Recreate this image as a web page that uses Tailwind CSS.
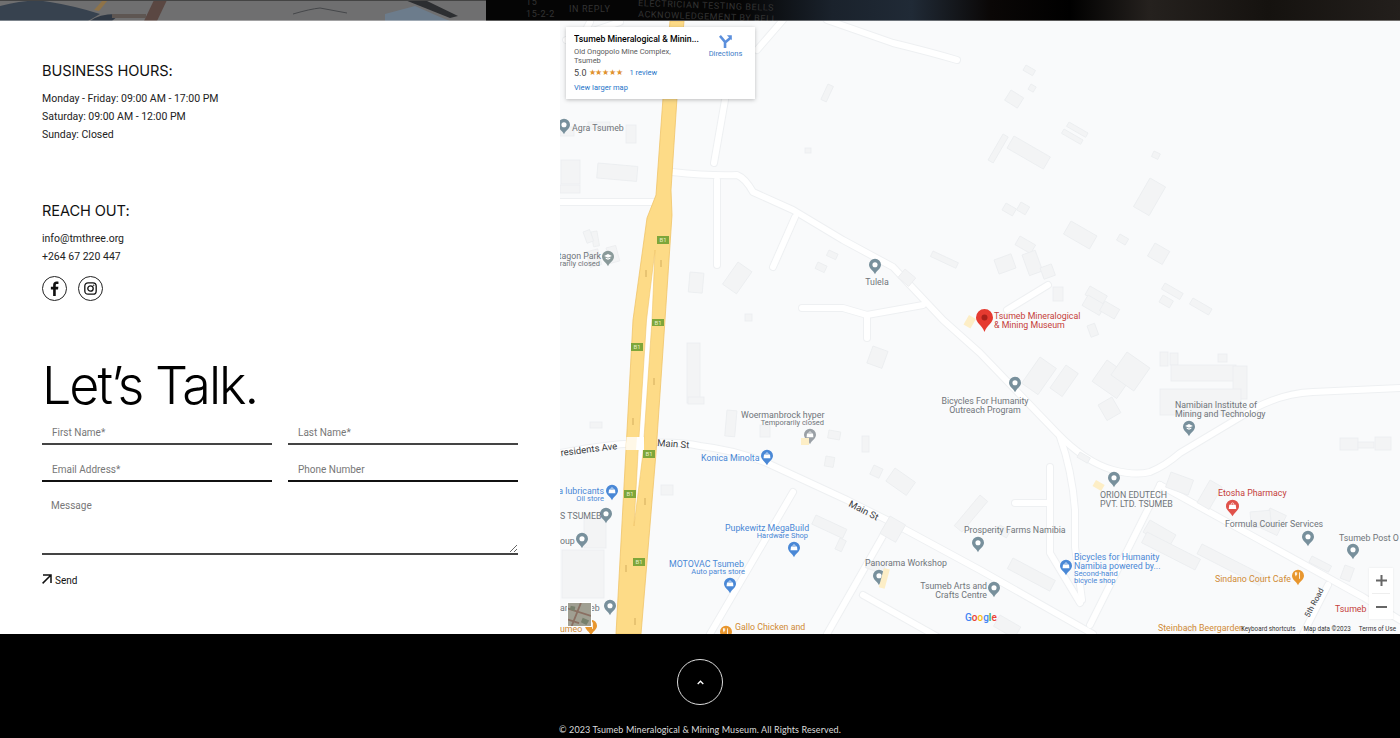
<!DOCTYPE html>
<html lang="en">
<head>
  <meta charset="UTF-8">
  <title>Tsumeb Mineralogical & Mining Museum - Contact</title>
  <script src="https://cdn.jsdelivr.net/npm/@tailwindcss/browser@4"></script>
</head>
<body class="bg-white overflow-hidden font-['Roboto',sans-serif] text-[#222]">

  <!-- bottom edge of the hero photo -->
  <svg class="block w-[1400px] h-[21px]" viewBox="0 0 1400 21">
    <defs>
      <linearGradient id="heroRight" x1="0" x2="1" y1="0" y2="0">
        <stop offset="0" stop-color="#050505"/><stop offset="0.14" stop-color="#1a222c"/><stop offset="0.26" stop-color="#202a36"/><stop offset="0.38" stop-color="#0a0706"/><stop offset="0.5" stop-color="#000"/><stop offset="0.62" stop-color="#25211e"/><stop offset="0.8" stop-color="#15120f"/><stop offset="1" stop-color="#231f1c"/>
      </linearGradient>
    </defs>
    <rect width="486" height="21" fill="#6f6f70"/>
    <path d="M0 6Q30-2 50 2 75 6 100 14L88 21H0z" fill="#37424f"/>
    <path d="M90 21Q100 13 120 14L112 21z" fill="#2f3844"/>
    <path d="M94 10L103 0H108L99 11z" fill="#8f7348"/>
    <path d="M144 21L154 0H167L157 21z" fill="#5a4742"/>
    <path d="M112 14H146V18H112z" fill="#5e5652"/>
    <path d="M293 14Q310 9 320 8L347 13" stroke="#45474a" fill="none"/>
    <path d="M385 14L415 6 440 17 450 21H385z" fill="#6b8093" opacity=".8"/>
    <path d="M405 0H425L458 16 450 18z" fill="#2c2e31"/>
    <rect y="0" width="486" height="1" fill="#444"/>
    <rect x="486" width="914" height="21" fill="#050505"/>
    <rect x="740" width="660" height="21" fill="url(#heroRight)"/>
    <g fill="#333" font-family="Roboto, sans-serif" font-size="9" letter-spacing=".6">
      <text x="526" y="5">15</text>
      <text x="526" y="17">15-2-2</text>
      <text x="569" y="12">IN REPLY</text>
      <text x="638" y="6" transform="rotate(2 638 6)">ELECTRICIAN TESTING BELLS</text>
      <text x="638" y="17" transform="rotate(2 638 17)">ACKNOWLEDGEMENT BY BELL</text>
    </g>
    <rect y="20" width="1400" height="1" fill="#fff" opacity=".35"/>
  </svg>

  <main class="flex h-[613px]">
    <section class="w-[560px] shrink-0 px-[42px] pt-[40px]">
      <h3 class="font-['Inter',sans-serif] text-[14.6px] leading-5 tracking-[-0.1px] text-[#111]">BUSINESS HOURS:</h3>
      <div class="mt-[9px] text-[10.5px] leading-[18px]">
        <p>Monday - Friday: 09:00 AM - 17:00 PM</p>
        <p>Saturday: 09:00 AM - 12:00 PM</p>
        <p>Sunday: Closed</p>
      </div>

      <h3 class="mt-[57px] font-['Inter',sans-serif] text-[14.6px] leading-5 tracking-[-0.1px] text-[#111]">REACH OUT:</h3>
      <div class="mt-[9px] text-[10.5px] leading-[18px]">
        <p>info@tmthree.org</p>
        <p>+264 67 220 447</p>
      </div>
      <div class="mt-[10px] flex gap-[11px]">
        <a href="#" class="w-[25px] h-[25px] rounded-full border border-[#222] flex items-center justify-center">
          <svg class="w-[15px] h-[15px]" viewBox="0 0 24 24" fill="#111"><path d="M14 24V13.500h3.600l.6-4.200H14V6.700c0-1.200.4-2 2.100-2h2.200V1c-.4 0-1.700-.2-3.200-.2-3.200 0-5.300 1.900-5.300 5.500v3H6.200v4.200h3.600V24z"/></svg>
        </a>
        <a href="#" class="w-[25px] h-[25px] rounded-full border border-[#222] flex items-center justify-center">
          <svg class="w-[13px] h-[13px]" viewBox="0 0 24 24" fill="none" stroke="#111" stroke-width="2.400"><rect x="1.500" y="1.500" width="21" height="21" rx="6"/><circle cx="12" cy="12" r="5"/><circle cx="18" cy="6" r=".8" fill="#111" stroke-width="1"/></svg>
        </a>
      </div>

      <h1 class="mt-[55px] font-['Inter',sans-serif] text-[52px] leading-[60px] font-light text-black tracking-[-2px]">Let’s Talk.</h1>

      <form class="mt-[5px]">
        <div class="grid grid-cols-2 gap-x-4 gap-y-[13px]">
          <input class="w-full h-[24px] pl-[10px] text-[10px] border-b-2 border-[#444] outline-none placeholder:text-[#777]" placeholder="First Name*">
          <input class="w-full h-[24px] pl-[10px] text-[10px] border-b-2 border-[#444] outline-none placeholder:text-[#777]" placeholder="Last Name*">
          <input class="w-full h-[24px] pl-[10px] text-[10px] border-b-2 border-[#111] outline-none placeholder:text-[#777]" placeholder="Email Address*">
          <input class="w-full h-[24px] pl-[10px] text-[10px] border-b-2 border-[#111] outline-none placeholder:text-[#777]" placeholder="Phone Number">
        </div>
        <textarea class="block w-full h-[73px] pl-[9px] pt-[16px] text-[10px] border-b-2 border-[#444] outline-none placeholder:text-[#777]" placeholder="Message"></textarea>
        <button type="button" class="mt-[20px] flex items-center gap-[3px] text-[10px] leading-3 text-[#111]">
          <svg class="w-[10px] h-[10px] -translate-y-[2px]" viewBox="0 0 10 10" fill="none" stroke="#111" stroke-width="1.500"><path d="M1 1h8v8M9 1L.6 9.400"/></svg>
          Send
        </button>
      </form>
    </section>

    <section class="relative flex-1 overflow-hidden bg-[#f9fafb]">
      <svg class="block w-[840px] h-[613px]" viewBox="560 21 840 613" font-family="Roboto, sans-serif" font-size="8.800">
        <defs>
          <symbol id="pin" viewBox="0 0 14 18"><path d="M7 0a7 7 0 0 1 7 7c0 4.500-4.800 6.500-7 11C4.800 13.500 0 11.500 0 7a7 7 0 0 1 7-7z"/><circle cx="7" cy="7" r="3" fill="#fff"/></symbol>
          <symbol id="bag" viewBox="0 0 14 18"><path d="M7 0a7 7 0 0 1 7 7c0 4.500-4.800 6.500-7 11C4.800 13.500 0 11.500 0 7a7 7 0 0 1 7-7z"/><path d="M3.500 5.500h7l.5 4.500H3z" fill="#fff"/><path d="M5.500 5.500a1.500 2 0 0 1 3 0" fill="none" stroke="#fff" stroke-width=".8"/></symbol>
          <symbol id="cap" viewBox="0 0 14 18"><path d="M7 0a7 7 0 0 1 7 7c0 4.500-4.800 6.500-7 11C4.800 13.500 0 11.500 0 7a7 7 0 0 1 7-7z"/><path d="M2.500 6L7 3.800 11.500 6 7 8.200z" fill="#fff"/><path d="M4.300 7.700v1.500L7 10.500l2.700-1.300V7.700L7 9z" fill="#fff"/></symbol>
          <symbol id="food" viewBox="0 0 14 18"><path d="M7 0a7 7 0 0 1 7 7c0 4.500-4.800 6.500-7 11C4.800 13.500 0 11.500 0 7a7 7 0 0 1 7-7z"/><path d="M4.500 3v4.500M8.800 3v7.500M4 3v2.500h1.500V3" stroke="#fff" fill="none"/></symbol>
        </defs>

        <!-- roads, casing first -->
        <g fill="none" stroke="#eef0f2" stroke-width="8" stroke-linecap="round" stroke-linejoin="round">
          <path d="M560 453Q600 445 640 443T700 446Q735 450 767 463L847 500 893 523 980 570 1093 634"/>
          <path d="M672 172Q710 176 737 175 745 178 753 192L793 210 843 240 893 267 943 320 980 353 1057 433Q1085 462 1113 470 1135 476 1150 472 1165 466 1180 453L1257 407Q1285 393 1313 392L1400 388"/>
          <path d="M725 100L714 163"/><path d="M717 180V265"/><path d="M795 217L773 267"/>
          <path d="M560 202H653"/>
          <path d="M827 20L893 43Q930 52 957 60"/><path d="M783 20L757 50"/>
          <path d="M802 308H843L867 315 923 305"/><path d="M867 315V338"/>
          <path d="M1060 437Q1072 470 1075 510V547L1082 600"/><path d="M1050 467V553L1080 603"/><path d="M1015 503H1050"/>
          <path d="M1160 485L1363 597 1400 620"/><path d="M1160 485L1090 625"/>
          <path d="M793 492L710 634"/><path d="M888 527L827 634"/><path d="M863 595L943 640"/><path d="M1328 585L1303 634"/>
          <path d="M1007 310L1048 285"/>
          <path d="M570 60L590 22"/><path d="M566 40L620 22"/>
        </g>
        <g fill="none" stroke="#fff" stroke-width="6" stroke-linecap="round" stroke-linejoin="round">
          <path d="M560 453Q600 445 640 443T700 446Q735 450 767 463L847 500 893 523 980 570 1093 634"/>
          <path d="M672 172Q710 176 737 175 745 178 753 192L793 210 843 240 893 267 943 320 980 353 1057 433Q1085 462 1113 470 1135 476 1150 472 1165 466 1180 453L1257 407Q1285 393 1313 392L1400 388"/>
          <path d="M725 100L714 163"/><path d="M717 180V265"/><path d="M795 217L773 267"/>
          <path d="M560 202H653"/>
          <path d="M827 20L893 43Q930 52 957 60"/><path d="M783 20L757 50"/>
          <path d="M802 308H843L867 315 923 305"/><path d="M867 315V338"/>
          <path d="M1060 437Q1072 470 1075 510V547L1082 600"/><path d="M1050 467V553L1080 603"/><path d="M1015 503H1050"/>
          <path d="M1160 485L1363 597 1400 620"/><path d="M1160 485L1090 625"/>
          <path d="M793 492L710 634"/><path d="M888 527L827 634"/><path d="M863 595L943 640"/><path d="M1328 585L1303 634"/>
          <path d="M1007 310L1048 285"/>
          <path d="M570 60L590 22"/><path d="M566 40L620 22"/>
        </g>

        <!-- buildings -->
        <g fill="#f3f4f5" stroke="#ebedef" stroke-width=".8">
          <rect x="828" y="84" width="6" height="17" transform="rotate(25 828 84)"/><rect x="805" y="148" width="6" height="5"/>
          <rect x="1026" y="65" width="11" height="6" transform="rotate(30 1026 65)"/><rect x="1031" y="84" width="6" height="6" transform="rotate(30 1031 84)"/>
          <rect x="1011" y="90" width="15" height="12" transform="rotate(32 1011 90)"/><rect x="1069" y="122" width="22" height="5" transform="rotate(30 1069 122)"/>
          <rect x="1064" y="129" width="22" height="5" transform="rotate(30 1064 129)"/><rect x="1014" y="136" width="42" height="14" transform="rotate(30 1014 136)"/>
          <rect x="1003" y="134" width="6" height="30" transform="rotate(30 1003 134)"/><rect x="1154" y="151" width="7" height="6" transform="rotate(25 1154 151)"/>
          <rect x="1150" y="178" width="18" height="33" transform="rotate(30 1150 178)"/><rect x="1071" y="221" width="30" height="15" transform="rotate(30 1071 221)"/>
          <rect x="1120" y="234" width="10" height="7" transform="rotate(30 1120 234)"/><rect x="1155" y="243" width="17" height="15" transform="rotate(30 1155 243)"/>
          <rect x="1006" y="203" width="12" height="8" transform="rotate(30 1006 203)"/><rect x="1020" y="236" width="18" height="10" transform="rotate(30 1020 236)"/>
          <rect x="1021" y="202" width="10" height="9" transform="rotate(30 1021 202)"/><rect x="994" y="260" width="18" height="15" transform="rotate(-20 994 260)"/>
          <rect x="1022" y="255" width="14" height="22" transform="rotate(-20 1022 255)"/><rect x="1040" y="268" width="12" height="12" transform="rotate(-20 1040 268)"/>
          <rect x="1090" y="286" width="20" height="10" transform="rotate(30 1090 286)"/><rect x="1088" y="295" width="20" height="12" transform="rotate(30 1088 295)"/>
          <rect x="1105" y="301" width="17" height="11" transform="rotate(30 1105 301)"/><rect x="1165" y="283" width="21" height="7" transform="rotate(30 1165 283)"/>
          <rect x="1193" y="298" width="22" height="7" transform="rotate(30 1193 298)"/><rect x="1163" y="295" width="12" height="8" transform="rotate(30 1163 295)"/>
          <rect x="560" y="127" width="14" height="9"/><rect x="588" y="122" width="22" height="7"/><rect x="626" y="125" width="10" height="18"/>
          <rect x="560" y="185" width="20" height="8"/><rect x="598" y="163" width="40" height="15" transform="rotate(5 598 163)"/>
          <rect x="561" y="160" width="19" height="24"/><rect x="591" y="232" width="6" height="15" transform="rotate(-10 591 232)"/>
          <rect x="583" y="232" width="7" height="12" transform="rotate(-20 583 232)"/><rect x="586" y="252" width="12" height="16" transform="rotate(-15 586 252)"/>
          <rect x="606" y="248" width="10" height="16" transform="rotate(-15 606 248)"/><rect x="690" y="272" width="14" height="20" transform="rotate(5 690 272)"/>
          <rect x="738" y="262" width="17" height="27" transform="rotate(35 738 262)"/><rect x="745" y="314" width="7" height="7"/>
          <rect x="818" y="262" width="10" height="7" transform="rotate(25 818 262)"/><rect x="829" y="250" width="10" height="6" transform="rotate(25 829 250)"/>
          <rect x="933" y="251" width="28" height="6" transform="rotate(25 933 251)"/><rect x="905" y="269" width="14" height="11" transform="rotate(40 905 269)"/>
          <rect x="873" y="346" width="16" height="18" transform="rotate(20 873 346)"/><rect x="687" y="343" width="13" height="60"/>
          <rect x="688" y="397" width="16" height="7"/><rect x="727" y="410" width="10" height="26" transform="rotate(5 727 410)"/>
          <rect x="760" y="425" width="10" height="12"/><rect x="862" y="436" width="7" height="16"/><rect x="829" y="430" width="12" height="8" transform="rotate(10 829 430)"/>
          <rect x="826" y="456" width="9" height="10" transform="rotate(10 826 456)"/><rect x="874" y="465" width="10" height="10" transform="rotate(25 874 465)"/>
          <rect x="895" y="468" width="25" height="16" transform="rotate(35 895 468)"/><rect x="590" y="422" width="12" height="6"/>
          <rect x="661" y="485" width="12" height="10"/><rect x="816" y="515" width="34" height="10" transform="rotate(25 816 515)"/>
          <rect x="840" y="538" width="7" height="12" transform="rotate(25 840 538)"/><rect x="890" y="516" width="18" height="20" transform="rotate(30 890 516)"/>
          <rect x="562" y="550" width="42" height="48"/><rect x="584" y="518" width="22" height="30"/><rect x="868" y="560" width="18" height="8" transform="rotate(20 868 560)"/>
          <rect x="1053" y="287" width="10" height="14"/><rect x="1087" y="326" width="8" height="12" transform="rotate(-20 1087 326)"/>
          <rect x="1040" y="357" width="20" height="32" transform="rotate(35 1040 357)"/><rect x="1066" y="365" width="15" height="28" transform="rotate(35 1066 365)"/>
          <rect x="1107" y="360" width="30" height="26" transform="rotate(35 1107 360)"/><rect x="1127" y="352" width="28" height="28" transform="rotate(35 1127 352)"/>
          <rect x="1160" y="352" width="8" height="14"/><rect x="1170" y="353" width="8" height="12"/><rect x="1171" y="365" width="65" height="16"/>
          <rect x="1233" y="366" width="14" height="33"/><rect x="1160" y="389" width="81" height="26"/><rect x="1218" y="354" width="9" height="8"/>
          <rect x="1340" y="438" width="18" height="12"/><rect x="1358" y="442" width="16" height="6"/><rect x="1375" y="437" width="16" height="13"/>
          <rect x="1080" y="452" width="12" height="6" transform="rotate(30 1080 452)"/><rect x="1098" y="405" width="16" height="18" transform="rotate(-30 1098 405)"/>
          <rect x="1171" y="472" width="24" height="16" transform="rotate(20 1171 472)"/><rect x="1210" y="480" width="14" height="26" transform="rotate(30 1210 480)"/>
          <rect x="1150" y="520" width="30" height="14" transform="rotate(30 1150 520)"/><rect x="1147" y="532" width="60" height="12" transform="rotate(27 1147 532)"/>
          <rect x="1202" y="544" width="70" height="11" transform="rotate(27 1202 544)"/><rect x="1270" y="508" width="18" height="22" transform="rotate(25 1270 508)"/>
          <rect x="1250" y="512" width="20" height="16" transform="rotate(-5 1250 512)"/><rect x="1312" y="556" width="22" height="7" transform="rotate(27 1312 556)"/>
          <rect x="1345" y="565" width="10" height="14" transform="rotate(20 1345 565)"/><rect x="1013" y="558" width="48" height="12" transform="rotate(28 1013 558)"/>
          <rect x="1000" y="615" width="24" height="13" transform="rotate(30 1000 615)"/><rect x="980" y="495" width="10" height="40" transform="rotate(40 980 495)"/>
          <rect x="1185" y="626" width="10" height="6"/><rect x="1000" y="525" width="12" height="8" transform="rotate(30 1000 525)"/>
        </g>

        <!-- B1 highway -->
        <path d="M670 21H684L677 98 671 190 672 215 665 320 656 453 641 634H616L633 320 647 218 656 195 663 98z" fill="#fddb87" stroke="#f0c468" stroke-width=".8"/>
        <path d="M655 250L652 320 643 453 634 526 638 453 646.500 320z" fill="#fff" stroke="#f0c468" stroke-width=".6"/>
        <path d="M637 437H644V450H636z" fill="#fff"/>
        <path d="M626.500 437H637V450H625.500z" fill="#fff" opacity=".8"/>
        <g fill="#7ea63a">
          <rect x="657" y="236" width="12" height="8"/><rect x="652" y="319" width="12" height="7"/><rect x="631" y="343" width="12" height="8"/>
          <rect x="643" y="450" width="12" height="8"/><rect x="624" y="490" width="12" height="8"/><rect x="633" y="558" width="12" height="8"/>
        </g>
        <g fill="#e6f0c8" font-size="6" text-anchor="middle">
          <text x="663" y="242">B1</text><text x="658" y="325">B1</text><text x="637" y="349">B1</text>
          <text x="649" y="456">B1</text><text x="630" y="496">B1</text><text x="639" y="564">B1</text>
        </g>
        <g stroke="#d3ad5c" stroke-width="1" fill="none">
          <path d="M661 260v7M646 270v7M633 418v7M654 378v7M645 498v7M626 565v7M635 618v7"/>
        </g>

        <!-- pins -->
        <g fill="#78909c">
          <use href="#pin" x="558" y="118" width="12" height="17"/><use href="#cap" x="602" y="250" width="12" height="17" fill="#8a9a9a"/>
          <use href="#pin" x="869" y="258" width="12" height="17"/><use href="#pin" x="1009" y="376" width="12" height="17"/>
          <use href="#pin" x="600" y="507" width="12" height="17"/><use href="#pin" x="576" y="532" width="12" height="17"/>
          <use href="#pin" x="604" y="599" width="12" height="17"/><use href="#pin" x="873" y="569" width="12" height="17"/>
          <use href="#pin" x="988" y="581" width="12" height="17"/><use href="#pin" x="972" y="536" width="12" height="17"/>
          <use href="#cap" x="1183" y="420" width="12" height="17"/><use href="#pin" x="1108" y="471" width="12" height="17"/>
          <use href="#pin" x="1302" y="530" width="12" height="17"/><use href="#pin" x="1347" y="543" width="12" height="17"/>
          <use href="#bag" x="804" y="428" width="12" height="17" fill="#9aa0a6"/>
        </g>
        <g fill="#4a88d6">
          <use href="#bag" x="761" y="449" width="12" height="17"/><use href="#bag" x="606" y="484" width="12" height="17"/>
          <use href="#bag" x="788" y="541" width="12" height="17"/><use href="#bag" x="724" y="577" width="12" height="17"/>
          <use href="#bag" x="1060" y="559" width="12" height="17"/>
        </g>
        <g fill="#e8962e">
          <use href="#food" x="1292" y="569" width="12" height="17"/><use href="#food" x="720" y="625" width="12" height="17"/><use href="#food" x="585" y="619" width="12" height="17"/>
        </g>
        <use href="#bag" x="1226" y="499" width="13" height="18" fill="#e0524b"/>
        <path d="M984.500 309a8.500 8.500 0 0 1 8.500 8.500c0 5.500-6 7.500-8.500 14.500-2.500-7-8.500-9-8.500-14.500a8.500 8.500 0 0 1 8.500-8.500z" fill="#e53a30"/>
        <circle cx="984.500" cy="317.500" r="3" fill="#a8201a"/>
        <rect x="969" y="315" width="8" height="11" fill="#fdeec6" transform="rotate(30 969 315)"/>
        <rect x="1096" y="480" width="10" height="7" fill="#fdeec6" transform="rotate(30 1096 480)"/>
        <rect x="801" y="438" width="8" height="7" fill="#fdeec6"/>
        <rect x="884" y="568" width="6" height="20" fill="#fdeec6" transform="rotate(15 884 568)"/>

        <!-- labels -->
        <g fill="#70757a">
          <text x="572" y="131">Agra Tsumeb</text>
          <text x="601" y="259" text-anchor="end">tagon Park</text>
          <text x="600" y="266" text-anchor="end" font-size="7.500">orarily closed</text>
          <text x="877" y="285" text-anchor="middle">Tulela</text>
          <text x="985" y="404" text-anchor="middle">Bicycles For Humanity</text>
          <text x="985" y="413" text-anchor="middle">Outreach Program</text>
          <text x="741" y="418">Woermanbrock hyper</text>
          <text x="824" y="425" text-anchor="end" font-size="7.500">Temporarily closed</text>
          <text x="560" y="519">S TSUMEB</text>
          <text x="560" y="544">oup</text>
          <text x="560" y="611">arl</text>
          <text x="590" y="611">eb</text>
          <text x="865" y="566">Panorama Workshop</text>
          <text x="987" y="589" text-anchor="end">Tsumeb Arts and</text>
          <text x="987" y="598" text-anchor="end">Crafts Centre</text>
          <text x="964" y="533">Prosperity Farms Namibia</text>
          <text x="1175" y="408">Namibian Institute of</text>
          <text x="1175" y="417">Mining and Technology</text>
          <text x="1100" y="498">ORION EDUTECH</text>
          <text x="1100" y="507">PVT. LTD. TSUMEB</text>
          <text x="1225" y="527">Formula Courier Services</text>
          <text x="1339" y="541">Tsumeb Post O</text>
        </g>
        <g fill="#4a88d6">
          <text x="701" y="461">Konica Minolta</text>
          <text x="604" y="494" text-anchor="end">a lubricants</text>
          <text x="604" y="501" text-anchor="end" font-size="7.500">Oil store</text>
          <text x="725" y="531">Pupkewitz MegaBuild</text>
          <text x="808" y="538" text-anchor="end" font-size="7.500">Hardware Shop</text>
          <text x="669" y="567">MOTOVAC Tsumeb</text>
          <text x="745" y="574" text-anchor="end" font-size="7.500">Auto parts store</text>
          <text x="1074" y="560">Bicycles for Humanity</text>
          <text x="1074" y="569">Namibia powered by...</text>
          <text x="1074" y="576" font-size="7.500">Second-hand</text>
          <text x="1074" y="583" font-size="7.500">bicycle shop</text>
        </g>
        <g fill="#d08a35">
          <text x="735" y="630">Gallo Chicken and</text>
          <text x="1215" y="582">Sindano Court Cafe</text>
          <text x="1158" y="631">Steinbach Beergarden</text>
          <text x="560" y="632">umeo</text>
        </g>
        <g fill="#c5403a">
          <text x="994" y="319">Tsumeb Mineralogical</text>
          <text x="994" y="328">&amp; Mining Museum</text>
          <text x="1218" y="496">Etosha Pharmacy</text>
          <text x="1335" y="612">Tsumeb</text>
        </g>
        <g fill="#3c4043" font-size="9.500">
          <text transform="translate(561 456) rotate(-7)">residents Ave</text>
          <text transform="translate(657 446) rotate(4)">Main St</text>
          <text transform="translate(848 506) rotate(27)">Main St</text>
          <text transform="translate(1309 618) rotate(-62)" font-size="8">5th Road</text>
        </g>
        <text x="965" y="621" font-size="10" font-weight="500"><tspan fill="#4285f4">G</tspan><tspan fill="#ea4335">o</tspan><tspan fill="#fbbc05">o</tspan><tspan fill="#4285f4">g</tspan><tspan fill="#34a853">l</tspan><tspan fill="#ea4335">e</tspan></text>
      </svg>

      <!-- place card -->
      <div class="absolute left-[6px] top-[6px] w-[189px] h-[72px] bg-white shadow-[0_1px_4px_rgba(0,0,0,0.25)] flex">
        <div class="w-[140px] pl-[8px] pt-[6px]">
          <p class="text-[8.7px] leading-[12px] font-medium text-black truncate">Tsumeb Mineralogical &amp; Minin...</p>
          <p class="mt-[2px] text-[7.5px] leading-[9px] text-[#5b5b5b]">Old Ongopolo Mine Complex,<br>Tsumeb</p>
          <p class="mt-[2px] flex items-center text-[9px] leading-[12px] text-[#444]">5.0<span class="ml-[2px] text-[8px] tracking-[-0.2px] text-[#e0922e]">★★★★★</span><span class="ml-[7px] text-[7.5px] text-[#1a73c8]">1 review</span></p>
          <p class="mt-[4px] text-[7.5px] leading-[10px] text-[#1a73c8]">View larger map</p>
        </div>
        <div class="flex-1 flex flex-col items-center pt-[8px] pr-[10px]">
          <svg class="w-[13px] h-[13px]" viewBox="0 0 14 14" fill="none" stroke="#5b8fdc" stroke-width="2.800"><path d="M1 1l5.500 6.500V14M12.500 3L6.500 8"/><path d="M8.500 .4h5.300v5.300z" fill="#5b8fdc" stroke="none"/></svg>
          <span class="mt-[1px] text-[7.5px] leading-[10px] text-[#3c7cc8]">Directions</span>
        </div>
      </div>

      <!-- street view thumb -->
      <div class="absolute left-[7px] top-[581px] w-[25px] h-[25px] border border-white bg-[#9a9a8c] overflow-hidden">
        <svg class="w-full h-full" viewBox="0 0 25 25"><rect width="25" height="25" fill="#a09f92"/><path d="M0 6L25 14M4 25L14 0M0 18L12 22" stroke="#8a6f62" stroke-width="2" fill="none"/><path d="M16 16l7 3-3 5-6-3zM3 3l5 1-1 5-5-2z" fill="#77806c"/></svg>
      </div>

      <!-- zoom control -->
      <div class="absolute left-[809px] top-[547px] w-[24px] h-[51px] bg-white flex flex-col items-center shadow-[0_0_2px_rgba(0,0,0,0.08)]">
        <svg class="mt-[7px] w-[11px] h-[11px]" viewBox="0 0 11 11" fill="#666"><path d="M4.500 0h2v4.500H11v2H6.500V11h-2V6.500H0v-2h4.500z"/></svg>
        <div class="mt-[7px] w-[18px] h-px bg-[#eee]"></div>
        <div class="mt-[12px] w-[11px] h-[2px] bg-[#666]"></div>
      </div>

      <!-- attribution -->
      <div class="absolute right-[4px] top-[604px] flex gap-[8px] text-[6.3px] leading-[9px] text-[#333]">
        <span>Keyboard shortcuts</span><span>Map data ©2023</span><span>Terms of Use</span>
      </div>
    </section>
  </main>

  <footer class="h-[104px] bg-black flex flex-col items-center text-white">
    <a href="#" class="mt-[25px] w-[46px] h-[46px] rounded-full border border-[#ddd] flex items-center justify-center">
      <svg class="w-[7px] h-[5px]" viewBox="0 0 7 5" fill="none" stroke="#fff" stroke-width="1.300"><path d="M.7 4L3.500 1.200 6.300 4"/></svg>
    </a>
    <p class="mt-[19px] font-['Lato',sans-serif] text-[9px] leading-[12px] tracking-[0.1px] text-[#ddd]">© 2023 Tsumeb Mineralogical &amp; Mining Museum. All Rights Reserved.</p>
  </footer>

</body>
</html>
